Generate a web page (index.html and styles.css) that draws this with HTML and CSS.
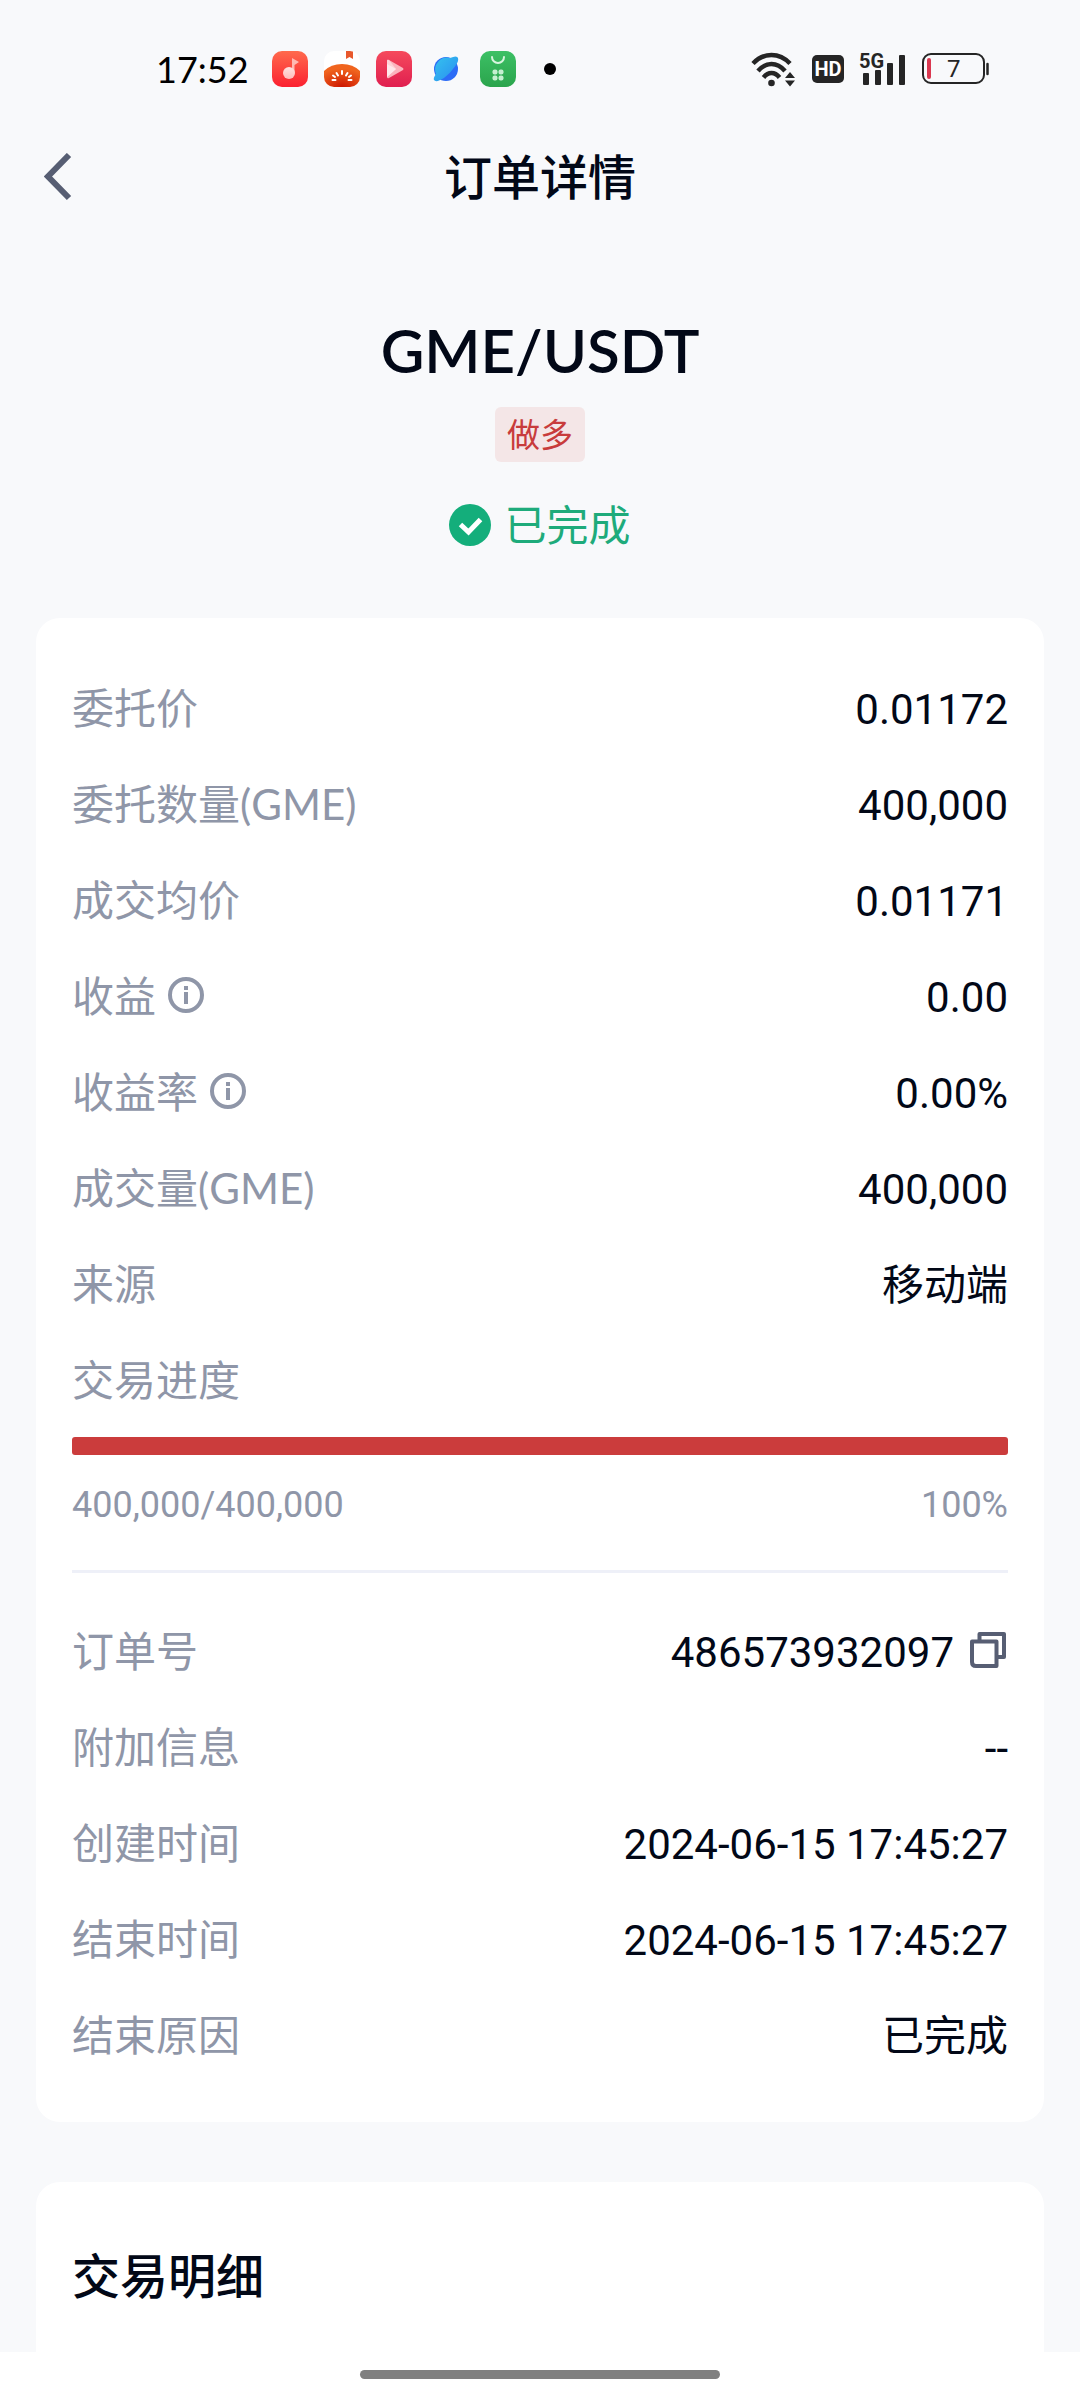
FILE: index.html
```html
<!DOCTYPE html>
<html lang="zh-CN">
<head>
  <meta charset="UTF-8">
  <meta name="viewport" content="width=device-width, initial-scale=1">
  <title>订单详情</title>
  <link rel="stylesheet" href="styles.css">
</head>
<body>
  <div class="statusbar">
    <span class="time">17:52</span>
    <div class="apps">
      <svg width="36" height="36" viewBox="0 0 36 36">
        <defs>
          <linearGradient id="gMusic" x1="0" y1="0" x2="0" y2="1"><stop offset="0" stop-color="#ff6a4d"/><stop offset="1" stop-color="#fb2030"/></linearGradient>
          <linearGradient id="gNote" x1="0" y1="0" x2="0" y2="1"><stop offset="0" stop-color="#ffe3e0"/><stop offset="1" stop-color="#ffbcbc"/></linearGradient>
        </defs>
        <rect width="36" height="36" rx="10" fill="url(#gMusic)"/>
        <path d="M20 7l7 4-4.500 3V22H20z" fill="#ffb9b2"/>
        <circle cx="17" cy="22" r="6" fill="url(#gNote)"/>
      </svg>
      <svg width="36" height="36" viewBox="0 0 36 36">
        <defs>
          <clipPath id="cTomato"><rect width="36" height="36" rx="10"/></clipPath>
          <radialGradient id="gTomato" cx=".5" cy="1" r=".8"><stop offset="0" stop-color="#cc1500"/><stop offset="1" stop-color="#f0641e"/></radialGradient>
        </defs>
        <g clip-path="url(#cTomato)">
          <rect width="36" height="36" fill="#fff"/>
          <path d="M0 20Q7 13 18 13T36 20V36H0z" fill="url(#gTomato)"/>
          <path d="M22 0h7v8l-3.500-2L22 8z" fill="#e8582c"/>
        </g>
        <path d="M18 20v3M12.500 22l1.500 2.500M23.500 22L22 24.500M8.500 29h3M24.500 29h3M9 24.500l2 1.500M27 24.500L25 26" stroke="#fff" stroke-width="2" stroke-linecap="round"/>
      </svg>
      <svg width="36" height="36" viewBox="0 0 36 36">
        <defs><linearGradient id="gVideo" x1="0" y1="0" x2="0" y2="1"><stop offset="0" stop-color="#f54a5c"/><stop offset="1" stop-color="#e01f50"/></linearGradient></defs>
        <rect width="36" height="36" rx="10" fill="url(#gVideo)"/>
        <path d="M11 10q0-2 2-1l14 8q1 1 0 2l-14 8q-2 1-2-1z" fill="#fbb4bd"/>
        <path d="M11 10q0-2 2-1l7 9-9 8z" fill="#ffd3d8"/>
        <path d="M11 26l9-8-9-5z" fill="#ffe9ec"/>
      </svg>
      <svg width="36" height="36" viewBox="0 0 36 36">
        <defs><linearGradient id="gPlanet" x1="0" y1="0" x2="1" y2="1"><stop offset="0" stop-color="#35c3ee"/><stop offset="1" stop-color="#2a8df0"/></linearGradient></defs>
        <circle cx="18" cy="18" r="12" fill="#2c6cf6"/>
        <path d="M22 7q7-3 8 0 1 3-3 8.500-5 7-11 11.500-8 5-10 2-1-2 2-6A12 12 0 0 1 22 7z" fill="url(#gPlanet)"/>
      </svg>
      <svg width="36" height="36" viewBox="0 0 36 36">
        <defs><linearGradient id="gShop" x1="0" y1="0" x2="0" y2="1"><stop offset="0" stop-color="#3cc065"/><stop offset="1" stop-color="#2aa44c"/></linearGradient></defs>
        <rect width="36" height="36" rx="10" fill="url(#gShop)"/>
        <path d="M12 6a6 6 0 0 0 12 0" fill="none" stroke="#d7f5df" stroke-width="2" stroke-linecap="round"/>
        <g fill="#c4efd0">
          <rect x="12.500" y="18.500" width="5" height="5" rx="2"/>
          <rect x="18.500" y="18.500" width="5" height="5" rx="2"/>
          <rect x="12.500" y="24.500" width="5" height="5" rx="2"/>
          <rect x="18.500" y="24.500" width="5" height="5" rx="2"/>
        </g>
      </svg>
      <span class="dot"></span>
    </div>
    <div class="signals">
      <svg width="46" height="36" viewBox="0 0 46 36">
        <g fill="none" stroke="#252525" stroke-width="4.500">
          <path d="M2 12.500Q10 4 20.500 4T39 12.500"/>
          <path d="M7 20Q13 13 20.500 13T34 20"/>
          <path d="M12.500 26.500Q16 22 20.500 22T28.500 26.500"/>
        </g>
        <circle cx="20.500" cy="32" r="3.300" fill="#252525"/>
        <path d="M39 21l5 6H34zM39 35.500l-5-6h10z" fill="#252525"/>
      </svg>
      <span class="hd">HD</span>
      <svg width="48" height="36" viewBox="0 0 48 36">
        <text x="0" y="17" class="net">5G</text>
        <g fill="#252525">
          <rect x="4" y="22" width="6" height="12" rx="1"/>
          <rect x="16" y="19" width="6" height="15" rx="1"/>
          <rect x="28" y="12" width="6" height="22" rx="1"/>
          <rect x="40" y="4" width="6" height="30" rx="1"/>
        </g>
      </svg>
      <svg width="68" height="32" viewBox="0 0 68 32">
        <rect x="1" y="1" width="61" height="29" rx="8" fill="none" stroke="#252525" stroke-width="2"/>
        <rect x="5" y="5" width="4" height="21" rx="2" fill="#da3850"/>
        <path d="M65.500 11v10" stroke="#252525" stroke-width="2.500" stroke-linecap="round"/>
        <text x="25" y="24" class="level">7</text>
      </svg>
    </div>
  </div>

  <header class="header">
    <button class="back" type="button" aria-label="返回">
      <svg width="28" height="48" viewBox="0 0 28 48"><path d="M25 2L4 23.500l21 21.500" fill="none" stroke="#575e73" stroke-width="6"/></svg>
    </button>
    <h1>订单详情</h1>
  </header>

  <section class="summary">
    <h2 class="pair">GME/USDT</h2>
    <span class="side">做多</span>
    <p class="state">
      <svg width="42" height="42" viewBox="0 0 42 42"><circle cx="21" cy="21" r="21" fill="#14ae7b"/><path d="M11.500 20.500l8 7.500L31.500 15.500" fill="none" stroke="#fff" stroke-width="5"/></svg>
      已完成
    </p>
  </section>

  <section class="card">
    <dl>
      <div class="row"><dt>委托价</dt><dd>0.01172</dd></div>
      <div class="row"><dt>委托数量(GME)</dt><dd>400,000</dd></div>
      <div class="row"><dt>成交均价</dt><dd>0.01171</dd></div>
      <div class="row">
        <dt>收益 <button class="icon" type="button" aria-label="收益说明"><svg width="36" height="38" viewBox="0 0 36 38"><circle cx="18" cy="18" r="16" fill="none" stroke="#8f96a8" stroke-width="4"/><path d="M18 9v4M18 15v12" stroke="#8f96a8" stroke-width="4"/></svg></button></dt>
        <dd>0.00</dd>
      </div>
      <div class="row">
        <dt>收益率 <button class="icon" type="button" aria-label="收益率说明"><svg width="36" height="38" viewBox="0 0 36 38"><circle cx="18" cy="18" r="16" fill="none" stroke="#8f96a8" stroke-width="4"/><path d="M18 9v4M18 15v12" stroke="#8f96a8" stroke-width="4"/></svg></button></dt>
        <dd>0.00%</dd>
      </div>
      <div class="row"><dt>成交量(GME)</dt><dd>400,000</dd></div>
      <div class="row"><dt>来源</dt><dd>移动端</dd></div>
    </dl>

    <div class="fill">
      <label for="fillBar">交易进度</label>
      <progress id="fillBar" max="400000" value="400000"></progress>
      <div class="fill-info"><span>400,000/400,000</span><span>100%</span></div>
    </div>

    <dl class="meta">
      <div class="row">
        <dt>订单号</dt>
        <dd>486573932097 <button class="icon" type="button" aria-label="复制订单号"><svg width="38" height="42" viewBox="0 0 38 42"><g fill="none" stroke="#575e73" stroke-width="4" stroke-linejoin="round"><path d="M9.500 8V2H34v23h-6"/><path d="M2 9.500H26.500V34H6q-4 0-4-4z"/></g></svg></button></dd>
      </div>
      <div class="row"><dt>附加信息</dt><dd>--</dd></div>
      <div class="row"><dt>创建时间</dt><dd>2024-06-15 17:45:27</dd></div>
      <div class="row"><dt>结束时间</dt><dd>2024-06-15 17:45:27</dd></div>
      <div class="row"><dt>结束原因</dt><dd>已完成</dd></div>
    </dl>
  </section>

  <section class="card trades">
    <h2>交易明细</h2>
  </section>

  <div class="navbar"><span class="handle"></span></div>
</body>
</html>
```
FILE: styles.css
```css
* {
  box-sizing: border-box;
}

body {
  margin: 0;
  min-height: 100vh;
  display: flex;
  flex-direction: column;
  background: #f8f9fb;
  color: #020817;
  font-family: Lato, "Noto Sans CJK SC", sans-serif;
  font-size: 42px;
  line-height: 60px;
}

h1, h2, p, dl, dd {
  margin: 0;
}

button {
  padding: 0;
  border: 0;
  background: none;
}

svg {
  display: block;
}

/* status bar */
.statusbar {
  display: flex;
  align-items: center;
  height: 138px;
  padding: 0 90px 0 156px;
}

.time {
  color: #000;
  font-size: 36px;
}

.apps {
  display: flex;
  align-items: center;
  gap: 16px;
  margin-left: 23px;
}

.dot {
  width: 12px;
  height: 12px;
  margin-left: 12px;
  border-radius: 50%;
  background: #000;
}

.signals {
  display: flex;
  align-items: center;
  gap: 15px;
  margin-left: auto;
}

.hd {
  width: 32px;
  border-radius: 5px;
  background: #252525;
  color: #fff;
  font: bold 20px/28px Roboto, sans-serif;
  text-align: center;
}

.net {
  fill: #252525;
  font: bold 20px Roboto, sans-serif;
}

.level {
  fill: #252525;
  font: 24px Roboto, sans-serif;
}

/* page header */
.header {
  display: grid;
  grid-template-columns: 100px 1fr 100px;
  align-items: center;
  height: 78px;
}

.back {
  padding-left: 44px;
}

.header h1 {
  font-size: 48px;
  font-weight: 500;
  text-align: center;
}

.summary {
  display: flex;
  flex-direction: column;
  align-items: center;
  padding: 98px 36px 63px;
}

.pair {
  font-size: 60px;
  font-weight: 600;
  line-height: 72px;
}

.side {
  margin-top: 21px;
  padding: 0 12px;
  border-radius: 6px;
  background: #f4e6e7;
  color: #c83c3c;
  font-size: 33px;
  line-height: 55px;
}

.state {
  display: flex;
  align-items: center;
  gap: 13px;
  margin-top: 33px;
  color: #1eab7b;
}

/* cards */
.card {
  margin: 0 36px 60px;
  padding: 60px 36px 57px;
  border-radius: 24px;
  background: #fff;
}

.card dl {
  display: flex;
  flex-direction: column;
  gap: 36px;
}

.row dt,
.row dd {
  display: flex;
  align-items: center;
}

.row {
  display: flex;
  align-items: baseline;
  justify-content: space-between;
  height: 60px;
}

.row dt {
  gap: 12px;
  color: #8f96a8;
}

.row dd {
  gap: 16px;
  font-family: Roboto, "Noto Sans CJK SC", sans-serif;
}

.fill {
  margin-top: 36px;
  color: #8f96a8;
}

.fill label {
  display: block;
}

.fill progress {
  display: block;
  width: 100%;
  height: 18px;
  margin: 27px 0 26px;
  border: 0;
  border-radius: 3px;
  overflow: hidden;
  appearance: none;
}

.fill progress::-webkit-progress-bar {
  background: #eef0f8;
}

.fill progress::-webkit-progress-value {
  background: #cb3c3c;
}

.fill-info {
  display: flex;
  justify-content: space-between;
  font-family: Roboto, sans-serif;
  font-size: 36px;
  line-height: 48px;
}

.card .meta {
  margin-top: 41px;
  padding-top: 48px;
  border-top: 3px solid #eef0f8;
}

.trades {
  flex: 1;
  margin-bottom: 0;
  padding-bottom: 36px;
  border-radius: 24px 24px 0 0;
}

.trades h2 {
  font-size: 48px;
  font-weight: 500;
  line-height: 68px;
}

.navbar {
  display: flex;
  justify-content: center;
  height: 48px;
  padding-top: 18px;
  background: #fff;
}

.handle {
  width: 33.3333%;
  height: 9px;
  border-radius: 5px;
  background: #808080;
}
```
